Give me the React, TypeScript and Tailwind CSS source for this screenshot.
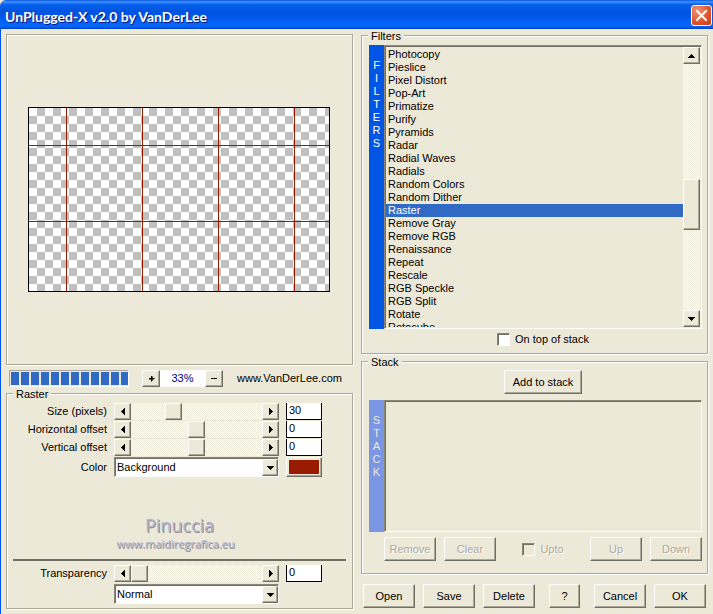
import { useState } from "react";
import type { ReactNode } from "react";

const FILTERS = [
  "Photocopy",
  "Pieslice",
  "Pixel Distort",
  "Pop-Art",
  "Primatize",
  "Purify",
  "Pyramids",
  "Radar",
  "Radial Waves",
  "Radials",
  "Random Colors",
  "Random Dither",
  "Raster",
  "Remove Gray",
  "Remove RGB",
  "Renaissance",
  "Repeat",
  "Rescale",
  "RGB Speckle",
  "RGB Split",
  "Rotate",
  "Rotocube",
];

const RAISED =
  "border border-t-white border-l-white border-r-[#716f64] border-b-[#716f64] bg-[#ece9d8] shadow-[inset_-1px_-1px_0_#aca899]";
const SUNKEN =
  "border border-t-[#8a8778] border-l-[#8a8778] border-r-white border-b-white shadow-[inset_1px_1px_0_#716f64]";
const ETCHED = "border border-[#aca899] shadow-[1px_1px_0_#fff,inset_1px_1px_0_#fff]";
const DITHER = "bg-[repeating-conic-gradient(#fff_0_25%,#ece9d8_0_50%)] bg-[length:2px_2px]";

const ARROWS = {
  up: "M0 4h7v-1h-1v-1h-1v-1h-1v-1h-1v1h-1v1h-1v1h-1z",
  down: "M0 0h7v1h-1v1h-1v1h-1v1h-1v-1h-1v-1h-1v-1h-1z",
  left: "M4 0v7h-1v-1h-1v-1h-1v-1h-1v-1h1v-1h1v-1h1v-1z",
  right: "M0 0v7h1v-1h1v-1h1v-1h1v-1h-1v-1h-1v-1h-1v-1z",
};

function Arrow({ dir }: { dir: keyof typeof ARROWS }) {
  const flat = dir === "up" || dir === "down";
  return (
    <svg width={flat ? 7 : 4} height={flat ? 4 : 7} shapeRendering="crispEdges" aria-hidden="true">
      <path d={ARROWS[dir]} />
    </svg>
  );
}

function ArrowButton({ dir, label }: { dir: keyof typeof ARROWS; label: string }) {
  return (
    <button type="button" aria-label={label} className={`flex h-[17px] w-[17px] shrink-0 items-center justify-center ${RAISED}`}>
      <Arrow dir={dir} />
    </button>
  );
}

function Button({ children, disabled, className = "w-[52px]" }: { children: ReactNode; disabled?: boolean; className?: string }) {
  return (
    <button
      type="button"
      disabled={disabled}
      className={`h-6 shrink-0 disabled:text-[#aca899] disabled:[text-shadow:1px_1px_0_#fff] ${RAISED} ${className}`}
    >
      {children}
    </button>
  );
}

function Group({ title, className, children }: { title: string; className: string; children: ReactNode }) {
  return (
    <fieldset className={`min-w-0 ${ETCHED} ${className}`}>
      <legend className="relative h-[13px] bg-[#ece9d8] px-[3px] leading-[15px]">{title}</legend>
      {children}
    </fieldset>
  );
}

function SliderRow({ id, label, initial }: { id: string; label: string; initial: [number, string] }) {
  const [pos, setPos] = useState(initial[0]);
  const [text, setText] = useState(initial[1]);
  return (
    <>
      <label htmlFor={id} className="text-right">{label}</label>
      <div className="flex min-w-0">
        <ArrowButton dir="left" label={`Decrease ${label}`} />
        <input
          id={id}
          type="range"
          value={pos}
          onChange={(e) => {
            setPos(Number(e.target.value));
            setText(e.target.value);
          }}
          className={`h-[17px] w-0 min-w-0 flex-1 appearance-none ${DITHER} [&::-webkit-slider-thumb]:h-[17px] [&::-webkit-slider-thumb]:w-[17px] [&::-webkit-slider-thumb]:appearance-none [&::-webkit-slider-thumb]:border [&::-webkit-slider-thumb]:border-t-white [&::-webkit-slider-thumb]:border-r-[#716f64] [&::-webkit-slider-thumb]:border-b-[#716f64] [&::-webkit-slider-thumb]:border-l-white [&::-webkit-slider-thumb]:bg-[#ece9d8] [&::-webkit-slider-thumb]:shadow-[inset_-1px_-1px_0_#aca899]`}
        />
        <ArrowButton dir="right" label={`Increase ${label}`} />
      </div>
      <input
        type="text"
        aria-label={`${label} value`}
        value={text}
        onChange={(e) => setText(e.target.value)}
        className="h-[17px] w-full border border-t-0 border-black bg-white px-0.5 pb-0.5"
      />
    </>
  );
}

function Combo({ id, label, options }: { id: string; label: string; options: string[] }) {
  return (
    <div className="relative h-5 min-w-0">
      <select
        id={id}
        aria-label={label}
        className={`h-full w-full appearance-none bg-white pl-0.5 ${SUNKEN}`}
      >
        {options.map((o) => (
          <option key={o}>{o}</option>
        ))}
      </select>
      <span className={`pointer-events-none absolute top-0.5 right-px bottom-px flex w-4 items-center justify-center ${RAISED}`}>
        <Arrow dir="down" />
      </span>
    </div>
  );
}

function SideLabel({ text, className }: { text: string; className: string }) {
  return (
    <div aria-label={text} className={`flex w-[15px] shrink-0 flex-col items-center leading-[13px] ${className}`}>
      {text.split("").map((c, i) => (
        <span key={i}>{c}</span>
      ))}
    </div>
  );
}

function Checkbox({ label, disabled }: { label: string; disabled?: boolean }) {
  return (
    <label className={`flex items-center gap-[5px] leading-[13px] ${disabled ? "text-[#aca899] [text-shadow:1px_1px_0_#fff]" : ""}`}>
      <input
        type="checkbox"
        disabled={disabled}
        className={`h-[13px] w-[13px] appearance-none bg-white checked:bg-[#316ac5] disabled:bg-[#ece9d8] ${SUNKEN}`}
      />
      {label}
    </label>
  );
}

function Preview() {
  return (
    <div className={`mt-[5px] flex justify-center py-18 pr-px ${ETCHED}`}>
      <svg width="302" height="185" viewBox="0 0 302 185" shapeRendering="crispEdges" role="img" aria-label="Preview">
        <defs>
          <pattern id="checker" x="1" y="1" width="16" height="16" patternUnits="userSpaceOnUse">
            <rect width="16" height="16" fill="#fff" />
            <rect x="8" width="8" height="8" fill="#c0c0c0" />
            <rect y="8" width="8" height="8" fill="#c0c0c0" />
          </pattern>
        </defs>
        <rect width="302" height="185" fill="#000" />
        <rect x="1" y="1" width="300" height="183" fill="url(#checker)" />
        {[38, 114, 190, 266].map((x) => (
          <rect key={x} x={x} y="1" width="1" height="183" fill="#981b00" />
        ))}
        {[38, 114].map((y) => (
          <rect key={y} x="1" y={y} width="300" height="1" fill="#981b00" />
        ))}
      </svg>
    </div>
  );
}

export default function App() {
  const [selected, setSelected] = useState("Raster");

  return (
    <div className="min-h-screen bg-[#ece9d8] font-['Liberation_Sans',Arial,sans-serif] text-[11px] leading-[17px] text-black">
      {/* Title bar */}
      <header className="flex h-[29px] items-center justify-between rounded-tl-md bg-[linear-gradient(#0a4fd8_0%,#3c93ff_6%,#0560ec_16%,#0053e0_40%,#0058ea_62%,#0566fc_84%,#0562f5_93%,#003dbc_100%)] pr-px pl-[5px]">
        <h1 className="pt-1 font-['Lato',sans-serif] text-[14px] font-bold text-white [text-shadow:1px_1px_0_#0a1883]">
          UnPlugged-X v2.0 by VanDerLee
        </h1>
        <button
          type="button"
          aria-label="Close"
          className="mt-0.5 flex h-[21px] w-[21px] items-center justify-center rounded-[3px] border border-white bg-[radial-gradient(circle_at_30%_25%,#ee9277,#e2552f_55%,#c83c12)]"
        >
          <svg width="13" height="13" viewBox="0 0 13 13" aria-hidden="true">
            <path d="M2 2l9 9M11 2l-9 9" stroke="#fff" strokeWidth="2" strokeLinecap="square" />
          </svg>
        </button>
      </header>

      <main className="grid grid-cols-2 gap-x-2 border-l border-[#0055e5] px-[5px] pb-[5px]">
        <div className="min-w-0">
          <Preview />

          {/* Progress and zoom */}
          <div className="mt-1 flex h-[18px] items-center pl-[3px]">
            <div
              role="progressbar"
              aria-label="Rendering"
              aria-valuenow={100}
              className="flex h-[17px] w-[120px] gap-0.5 overflow-hidden border border-t-[#aca899] border-r-white border-b-white border-l-[#aca899] p-px pr-0"
            >
              {Array.from({ length: 12 }, (_, i) => (
                <span key={i} className="w-2 flex-none bg-[#316ac5] last:w-auto last:flex-1" />
              ))}
            </div>
            <button type="button" aria-label="Zoom in" className={`ml-[13px] flex h-[17px] w-[18px] items-center justify-center ${RAISED}`}>
              <svg width="7" height="7" shapeRendering="crispEdges" aria-hidden="true">
                <path d="M3 1h1v2h2v1h-2v2h-1v-2h-2v-1h2z" stroke="#000" strokeWidth="0.5" />
              </svg>
            </button>
            <output className="h-[17px] w-[45px] bg-white text-center text-[#000080]">33%</output>
            <button type="button" aria-label="Zoom out" className={`flex h-[17px] w-[18px] items-center justify-center ${RAISED}`}>
              <svg width="7" height="7" shapeRendering="crispEdges" aria-hidden="true">
                <path d="M0 3h6v1h-6z" />
              </svg>
            </button>
            <a href="#vanderlee" className="ml-3.5">www.VanDerLee.com</a>
          </div>

          {/* Settings of the chosen filter */}
          <Group title="Raster" className="pb-1 [&>legend]:ml-1.5">
            <div className="grid grid-cols-[100px_minmax(0,1fr)_36px] items-center gap-x-[7px] gap-y-px pt-[3px] pr-[30px]">
              <SliderRow id="size" label="Size (pixels)" initial={[30, "30"]} />
              <SliderRow id="horizontal" label="Horizontal offset" initial={[50, "0"]} />
              <SliderRow id="vertical" label="Vertical offset" initial={[50, "0"]} />
              <label htmlFor="color" className="text-right">Color</label>
              <Combo id="color" label="Color" options={["Background", "Foreground", "Custom"]} />
              <button type="button" aria-label="Pick color" className={`h-5 p-0.5 ${RAISED}`}>
                <span className="block h-full bg-[#981b00]" />
              </button>
            </div>

            <div className="pt-9 pr-2 pb-2 text-center font-['Open_Sans',sans-serif] text-[#b4b4cc] [text-shadow:1px_1px_0_#8d8d98]">
              <p className="pl-2 text-[18px] leading-6">Pinuccia</p>
              <p className="text-[11px] leading-[14px]">www.maidiregrafica.eu</p>
            </div>

            <hr className="mx-1.5 h-0.5 border-0 bg-[#716f64]" />

            <div className="grid grid-cols-[100px_minmax(0,1fr)_36px] items-center gap-x-[7px] gap-y-0.5 pt-1 pr-[30px]">
              <SliderRow id="transparency" label="Transparency" initial={[0, "0"]} />
              <span />
              <Combo id="blend" label="Blend mode" options={["Normal", "Multiply", "Screen"]} />
            </div>
          </Group>
        </div>

        <div className="min-w-0">
          <Group title="Filters" className="pr-[5px] pb-[7px] pl-[7px] [&>legend]:-ml-px">
            <div className="mt-[3px] flex h-[284px]">
              <SideLabel text="FILTERS" className="bg-[#0055e5] pt-3.5 text-white" />
              <div className={`flex min-w-0 flex-1 p-px ${SUNKEN}`}>
                <ul role="listbox" aria-label="Filters" className="min-w-0 flex-1 overflow-hidden pt-px leading-[13px]">
                  {FILTERS.map((name) => (
                    <li
                      key={name}
                      role="option"
                      aria-selected={name === selected}
                      onClick={() => setSelected(name)}
                      className="h-[13px] pl-0.5 whitespace-nowrap aria-selected:bg-[#316ac5] aria-selected:text-white"
                    >
                      {name}
                    </li>
                  ))}
                </ul>
                <div className={`flex w-[17px] flex-col ${DITHER}`}>
                  <ArrowButton dir="up" label="Scroll up" />
                  <div className="flex-[115]" />
                  <div className={`h-[51px] ${RAISED}`} />
                  <div className="flex-[80]" />
                  <ArrowButton dir="down" label="Scroll down" />
                </div>
              </div>
            </div>
            <div className="mt-1 flex justify-center pl-[15px]">
              <Checkbox label="On top of stack" />
            </div>
          </Group>

          <Group title="Stack" className="mt-px pr-[5px] pb-3 pl-[7px] [&>legend]:-ml-px">
            <div className="flex justify-center pt-0.5 pl-[15px]">
              <Button className="w-[78px]">Add to stack</Button>
            </div>
            <div className="mt-1.5 flex h-[132px]">
              <SideLabel text="STACK" className="bg-[#7b96e2] pt-3.5 text-[#ece9d8]" />
              <ul role="listbox" aria-label="Stack" className={`min-w-0 flex-1 ${SUNKEN}`} />
            </div>
            <div className="mt-[5px] flex items-center gap-2 pl-[15px]">
              <Button disabled>Remove</Button>
              <Button disabled>Clear</Button>
              <div className="mx-auto">
                <Checkbox label="Upto" disabled />
              </div>
              <Button disabled>Up</Button>
              <Button disabled>Down</Button>
            </div>
          </Group>

          <div className="mt-2.5 flex gap-2 px-0.5">
            <Button>Open</Button>
            <Button>Save</Button>
            <Button>Delete</Button>
            <Button className="mx-auto w-[31px]">?</Button>
            <Button>Cancel</Button>
            <Button>OK</Button>
          </div>
        </div>
      </main>
    </div>
  );
}
